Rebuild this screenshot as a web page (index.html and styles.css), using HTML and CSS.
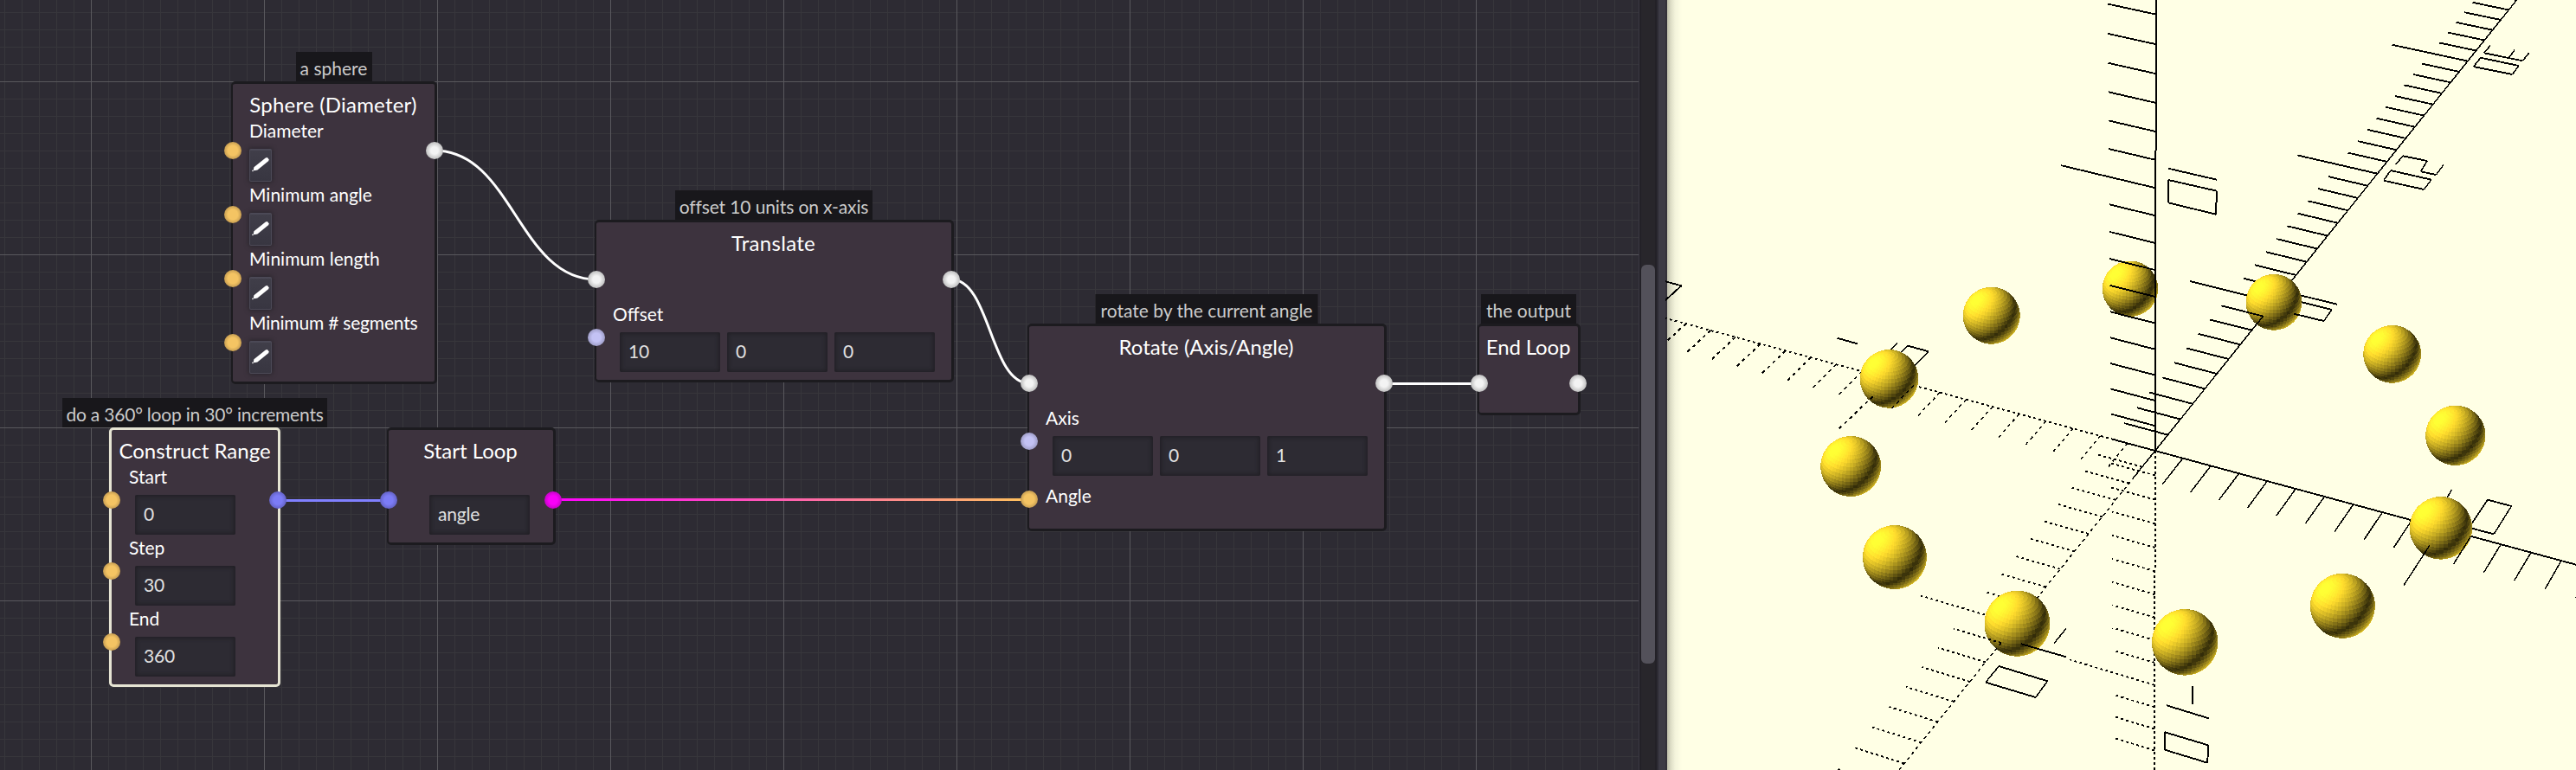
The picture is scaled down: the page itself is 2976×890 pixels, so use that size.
FILE: index.html
```html
<!DOCTYPE html>
<html lang="en">
<head>
<meta charset="utf-8">
<title>Graph editor</title>
<link rel="stylesheet" href="styles.css">
</head>
<body>
<svg class="defs" width="0" height="0">
  <symbol id="pencil" viewBox="0 0 26 38">
    <path d="M18.8 10.6 20.9 10 22.6 12.2 22.3 13.9 9.4 24.5 5.7 25.2 4.8 24.2 5.4 21.2Z" fill="#fff"/>
    <circle cx="4" cy="25.4" r=".8" fill="#fff"/>
  </symbol>
</svg>
<main class="app">
  <section class="editor">
    <svg class="wires" width="1894" height="890" fill="none" stroke-width="3">
      <defs>
        <linearGradient id="loopWire" gradientUnits="userSpaceOnUse" x1="639" y1="0" x2="1189" y2="0">
          <stop offset="0" stop-color="#ff00ff"/><stop offset="1" stop-color="#ffc35c"/>
        </linearGradient>
      </defs>
      <path d="M502 174C592 174 599 323 689 323" stroke="#fff"/>
      <path d="M1099 323C1144 323 1144 443 1189 443" stroke="#fff"/>
      <path d="M1599 443.5H1709" stroke="#fff"/>
      <path d="M321 578.5H449" stroke="#8080ff"/>
      <path d="M639 577.5H1189" stroke="url(#loopWire)"/>
    </svg>

    <article class="node sphere">
      <p class="comment">a sphere</p>
      <h2>Sphere (Diameter)</h2>
      <label>Diameter</label><button><svg><use href="#pencil"/></svg></button>
      <label>Minimum angle</label><button><svg><use href="#pencil"/></svg></button>
      <label>Minimum length</label><button><svg><use href="#pencil"/></svg></button>
      <label class="long">Minimum # segments</label><button><svg><use href="#pencil"/></svg></button>
      <i class="port in number p67"></i><i class="port in number p141"></i>
      <i class="port in number p215"></i><i class="port in number p289"></i>
      <i class="port out shape p67"></i>
    </article>

    <article class="node range selected">
      <p class="comment">do a 360° loop in 30° increments</p>
      <h2>Construct Range</h2>
      <label>Start</label><div class="fields"><span>0</span></div>
      <label>Step</label><div class="fields"><span>30</span></div>
      <label>End</label><div class="fields"><span>360</span></div>
      <i class="port in number p71"></i><i class="port in number p153"></i><i class="port in number p235"></i>
      <i class="port out list p71"></i>
    </article>

    <article class="node start">
      <h2>Start Loop</h2>
      <div class="fields"><span>angle</span></div>
      <i class="port in list p71"></i><i class="port out any p71"></i>
    </article>

    <article class="node translate">
      <p class="comment">offset 10 units on x-axis</p>
      <h2>Translate</h2>
      <label>Offset</label><div class="fields"><span>10</span><span>0</span><span>0</span></div>
      <i class="port in shape p56"></i><i class="port in vector p123"></i><i class="port out shape p56"></i>
    </article>

    <article class="node rotate">
      <p class="comment">rotate by the current angle</p>
      <h2>Rotate (Axis/Angle)</h2>
      <label>Axis</label><div class="fields"><span>0</span><span>0</span><span>1</span></div>
      <label class="last">Angle</label>
      <i class="port in shape p56"></i><i class="port in vector p123"></i><i class="port in number p190"></i>
      <i class="port out shape p56"></i>
    </article>

    <article class="node end">
      <p class="comment">the output</p>
      <h2>End Loop</h2>
      <i class="port in shape p56"></i><i class="port out shape p56"></i>
    </article>
  </section>
  <div class="scrollbar"><div class="thumb"></div></div>
  <div class="splitter"></div>
  <section class="preview">
    <svg id="scene" width="1052" height="890" viewBox="1924 0 1052 890"></svg>
  </section>
</main>
<script src="scene.js"></script>
</body>
</html>
```

FILE: styles.css
```css
* { box-sizing: border-box; }
body { margin: 0; background: #2d2b33; font-family: Lato, "Noto Sans", sans-serif; font-size: 21px; color: #fff; }
.defs { position: absolute; }
.app { display: flex; width: 2976px; height: 890px; overflow: hidden; }

.editor {
  position: relative; flex: 0 0 1894px; height: 890px; overflow: hidden;
  border-right: 1px solid #3b3844;
  background-color: #2d2b33;
  background-image:
    linear-gradient(90deg, #59585d 1px, transparent 1px),
    linear-gradient(#59585d 1px, transparent 1px),
    linear-gradient(90deg, #37363b 1px, transparent 1px),
    linear-gradient(#37363b 1px, transparent 1px);
  background-size: 200px 200px, 200px 200px, 20px 20px, 20px 20px;
  background-position: 105px 0, 0 94px, 5px 0, 0 14px;
}
.wires { position: absolute; left: 0; top: 0; }

.node {
  position: absolute; display: flex; flex-direction: column; align-items: flex-start;
  background: #3d333e; border: 3px solid #1c1b1f; border-left-width: 2px;
  border-radius: 5px; padding: 9px 0 0 19px;
}
.sphere { left: 267px; top: 94px; width: 238px; height: 350px; }
.range { left: 126px; top: 494px; width: 198px; height: 300px; padding-left: 20px; }
.start { left: 447px; top: 494px; width: 195px; height: 136px; }
.translate { left: 687px; top: 254px; width: 415px; height: 188px; }
.rotate { left: 1187px; top: 374px; width: 415px; height: 240px; }
.end { left: 1707px; top: 374px; width: 119px; height: 106px; }
.selected { border-color: #e6e4d3; border-width: 3px; }

.node h2 {
  align-self: center; margin: 0 0 3px -20px; font-size: 24px; font-weight: 400;
  line-height: 29px; height: 29px; white-space: nowrap;
}
.sphere h2 { letter-spacing: .22px; }
.translate h2 { letter-spacing: .3px; }
.end h2 { letter-spacing: -.15px; }
.node label { line-height: 25px; height: 25px; white-space: nowrap; }
.node .long { letter-spacing: -.2px; }
.node button {
  width: 26px; height: 38px; margin: 9px 0 2px; padding: 0; border: 1px solid #4b4956; border-top-width: 2px;
  border-radius: 2px; background: linear-gradient(#403e49, #383641); box-shadow: 0 0 5px 1px #2a262d;
}
.node button svg { display: block; width: 26px; height: 38px; margin: -2px 0 0 -1px; }
.fields { display: flex; gap: 8px; margin: 9px 0 2px 8px; }
.range .fields { margin-left: 7px; }
.fields span {
  width: 116px; height: 46px; padding: 9px 10px 0; line-height: 26px; color: #e0e0e0;
  letter-spacing: -.2px;
  background: #2d2b33; border-radius: 2px; box-shadow: inset 0 0 4px 2px #222026;
}
.start .fields { margin: 34px 0 0 28px; }
.translate h2, .rotate h2 { margin-bottom: 55px; }
.rotate .last { margin-top: 8px; }

.comment {
  position: absolute; bottom: 100%; left: 50%; transform: translateX(-50%);
  margin: 0 0 3px; height: 34px; line-height: 37px; text-align: center; white-space: nowrap;
  background: #18171b; color: #cbcbcb;
}
.sphere .comment { width: 88px; }
.range .comment { width: 306px; letter-spacing: -.2px; }
.translate .comment { width: 228px; letter-spacing: -.12px; }
.rotate .comment { width: 257px; }
.end .comment { width: 110px; }

.port { position: absolute; width: 20px; height: 20px; border-radius: 50%; }
.in { left: -10px; }
.out { right: -10px; }
.p56 { top: 56px; } .p67 { top: 67px; } .p71 { top: 71px; } .p123 { top: 123px; }
.p141 { top: 141px; } .p153 { top: 153px; } .p190 { top: 190px; } .p215 { top: 215px; }
.p235 { top: 235px; } .p289 { top: 289px; }
.number { background: radial-gradient(#f4c463 40%, #c79e52 70%); }
.shape { background: radial-gradient(#f3f3f3 30%, #c0c0c0 70%); }
.list { background: radial-gradient(#7c7cf6 35%, #6463c6 70%); }
.any { background: radial-gradient(#f800f8 35%, #c504c6 70%); }
.vector { background: radial-gradient(#c3c2f4 35%, #9f9ec8 70%); }

.scrollbar {
  flex: 0 0 20px; height: 890px; padding-top: 306px; background: #28262b;
  border: 0 solid #232127; border-width: 0 2px;
}
.thumb { height: 461px; border-radius: 6px; background: #53515a; }
.splitter { flex: 0 0 12px; height: 890px; background: linear-gradient(90deg, #2d2b33 2px, #3d3b45 2px 10px, #35323a 10px); }
.preview { position: relative; flex: 0 0 1050px; height: 890px; background: linear-gradient(90deg, #bdbda9 0, #dcdcc5 4px, #f3f3db 9px, #ffffe5 17px); }
#scene { display: block; margin-left: -2px; position: relative; }
```

FILE: scene.js
```js
(function () {
  var svg = document.getElementById('scene');
  var out = [];

  // Perspective projection of a world point to the viewport.
  function project(x, y, z) {
    var w = 1 - 0.00336 * x + 0.0077 * y - 0.00573 * z;
    return [
      2489.8 + (31.94 * x + 14.817 * y + 0.06 * z) / w,
      521 + (8.65 * x - 18.48 * y - 28.63 * z) / w
    ];
  }

  function segment(a, b, dotted) {
    var dx = Math.abs(a[0] - b[0]), dy = Math.abs(a[1] - b[1]);
    var unit = Math.hypot(dx, dy) / Math.max(dx, dy);
    var dash = dotted ? ' stroke-dasharray="' + (2.8 * unit).toFixed(2) + ' ' + (3.2 * unit).toFixed(2) + '"' : '';
    // Steep lines are rasterised two pixels across, so their perpendicular width shrinks.
    var width = dx > dy ? 1.9 : dx < 2 ? 2 : 1.5;
    out.push('<path d="M' + a[0].toFixed(1) + ' ' + a[1].toFixed(1) + 'L' + b[0].toFixed(1) + ' ' + b[1].toFixed(1) +
      '" stroke-width="' + width + '"' + dash + '/>');
  }

  function outline(points) {
    for (var i = 0; i + 3 < points.length; i += 2) {
      segment([points[i], points[i + 1]], [points[i + 2], points[i + 3]], false);
    }
  }

  function tick(axis, n) {
    var k = n !== 0 && n % 10 === 0 ? 3.27 : 1.6;
    if (axis === 'x') segment(project(n, 0, 0), project(n, -k, 0), n < 0);
    if (axis === 'y') segment(project(0, n, 0), project(-k, n, 0), n < 0);
    if (axis === 'z') segment(project(0, 0, n), project(-k, 0, n), n < 0);
  }

  function ticks(axis, from, to) {
    for (var n = from; n <= to; n++) tick(axis, n);
  }

  // Unit sphere split in facets, lit by two opposite directional lights.
  function facets() {
    var cols = 48, rings = 24, t = 25 * Math.PI / 180, p = 55 * Math.PI / 180;
    var light = [-1, 1, 1.15], len = Math.hypot(light[0], light[1], light[2]);
    function view(polar, lon) {
      var x = Math.sin(polar) * Math.cos(lon), y = Math.sin(polar) * Math.sin(lon), z = Math.cos(polar);
      var rx = Math.cos(t) * x + Math.sin(t) * y, ry = -Math.sin(t) * x + Math.cos(t) * y;
      return [rx, ry * Math.cos(p) + z * Math.sin(p), -ry * Math.sin(p) + z * Math.cos(p)];
    }
    function shade(n) {
      var d = (n[0] * light[0] + n[1] * light[1] + n[2] * light[2]) / len;
      var i = 0.2 + Math.abs(d);
      return 'rgb(' + [249, 215, 44].map(function (c) { return Math.min(255, Math.round(c * i)); }).join(',') + ')';
    }
    function poly(points, normal) {
      return '<polygon points="' + points.map(function (q) {
        return q[0].toFixed(4) + ',' + (-q[1]).toFixed(4);
      }).join(' ') + '" fill="' + shade(normal) + '"/>';
    }
    var s = '', dl = 2 * Math.PI / cols, dp = Math.PI / rings, cap = [];
    for (var r = 0; r < rings - 1; r++) {
      for (var c = 0; c < cols; c++) {
        var a = (r + 0.5) * dp, b = a + dp, n = view(a + dp / 2, (c + 0.5) * dl);
        if (n[2] > -0.03) s += poly([view(a, c * dl), view(a, (c + 1) * dl), view(b, (c + 1) * dl), view(b, c * dl)], n);
      }
    }
    for (var k = 0; k < cols; k++) cap.push(view(dp / 2, k * dl));
    return s + poly(cap, view(0, 0));
  }

  function ball(cx, cy, r) {
    out.push('<use href="#ball" transform="translate(' + cx + ' ' + cy + ') scale(' + r + ')"/>');
  }

  // Axes
  segment(project(0, 0, 0), project(17, 0, 0));
  segment(project(0, 0, 0), project(-20, 0, 0), true);
  segment(project(0, 0, 0), project(0, 37, 0));
  segment(project(0, 0, 0), project(0, -10, 0), true);
  segment(project(0, 0, 0), project(0, 0, -14), true);
  ticks('x', -19, -11);
  ticks('x', -9, 9);
  ticks('x', 11, 15);
  ticks('y', -19, 36);

  // Scale numbers
  outline([2505, 194.7, 2561, 207.7]);
  outline([2505, 208, 2561, 220.7, 2560, 247.7, 2504.7, 234.3, 2505, 208]);
  outline([2877.2, 52.3, 2869.8, 61.3, 2914.3, 70.3, 2921.6, 61.3]);
  outline([2905.1, 57.7, 2898.5, 66.7]);
  outline([2865.8, 66.7, 2909.9, 76, 2902.5, 86, 2857.7, 77, 2865.8, 66.7]);
  outline([2767.7, 190.3, 2775.8, 180.3, 2804.1, 186, 2796.7, 198.3, 2814.4, 202, 2823.2, 190.3]);
  outline([2761.8, 197, 2808.9, 207.7, 2800.4, 219, 2753.8, 208.7, 2761.8, 197]);
  outline([2655, 340.7, 2699.8, 351.7]);
  outline([2655, 348.3, 2693.9, 358]);
  outline([2832.4, 566, 2826.1, 577]);
  outline([2855, 606, 2873.9, 577.7, 2901.4, 585, 2881.2, 617.3, 2854, 610.3]);
  outline([2533, 793.3, 2533, 813.7]);
  outline([2502.9, 815.3, 2551.7, 830.3]);
  outline([2501, 846.3, 2551, 861.3, 2550.3, 881.7, 2501, 866.7, 2501, 846.3]);
  outline([2386.8, 726.7, 2372.9, 743.7]);
  outline([2309.3, 770, 2365.4, 787.3, 2351.8, 806, 2293.9, 788.7, 2309.3, 770]);
  outline([2122.5, 390.7, 2145.7, 397.3]);
  outline([2192, 396.7, 2183, 406]);
  outline([2195, 409, 2204, 399.7, 2228.2, 406.3, 2212, 422.5]);
  outline([1924, 325.3, 1942.5, 330.3, 1924, 347]);

  // Ring of spheres; the z axis stands in front of the first one
  ball(2461, 333.7, 32.2);
  segment(project(0, 0, 0), project(0, 0, 18));
  ticks('z', -13, 17);
  ball(2300.7, 364.7, 33);
  ball(2182.5, 437.8, 33.8);
  ball(2138.2, 539, 35);
  ball(2188.9, 644, 37);
  ball(2330.4, 720.7, 38);
  ball(2524.2, 742.3, 38.3);
  ball(2706.4, 700.3, 37.5);
  ball(2819.9, 610.3, 36.3);
  ball(2836.8, 503.3, 34.7);
  ball(2763.7, 409.3, 33.4);
  ball(2627, 349.3, 32.4);

  // Lines in front of the spheres
  tick('x', 11);
  outline([2807, 630.3, 2776.9, 676.7]);
  tick('y', 9);
  segment(project(0, 9, 0), project(0, 7, 0));
  outline([2693.9, 358, 2684.7, 371, 2649.8, 362.7]);
  tick('x', -9);
  segment([2163.6, 458.3], project(-10, -3.27, 0), true);
  tick('y', -11);
  segment(project(0, -11, 0), project(0, -20, 0), true);
  outline([2335, 744.3, 2386.8, 759.3]);

  svg.innerHTML = '<defs><g id="ball" stroke="none">' + facets() + '</g></defs>' +
    '<g fill="none" stroke="#000" shape-rendering="crispEdges">' + out.join('') + '</g>';
})();
```
